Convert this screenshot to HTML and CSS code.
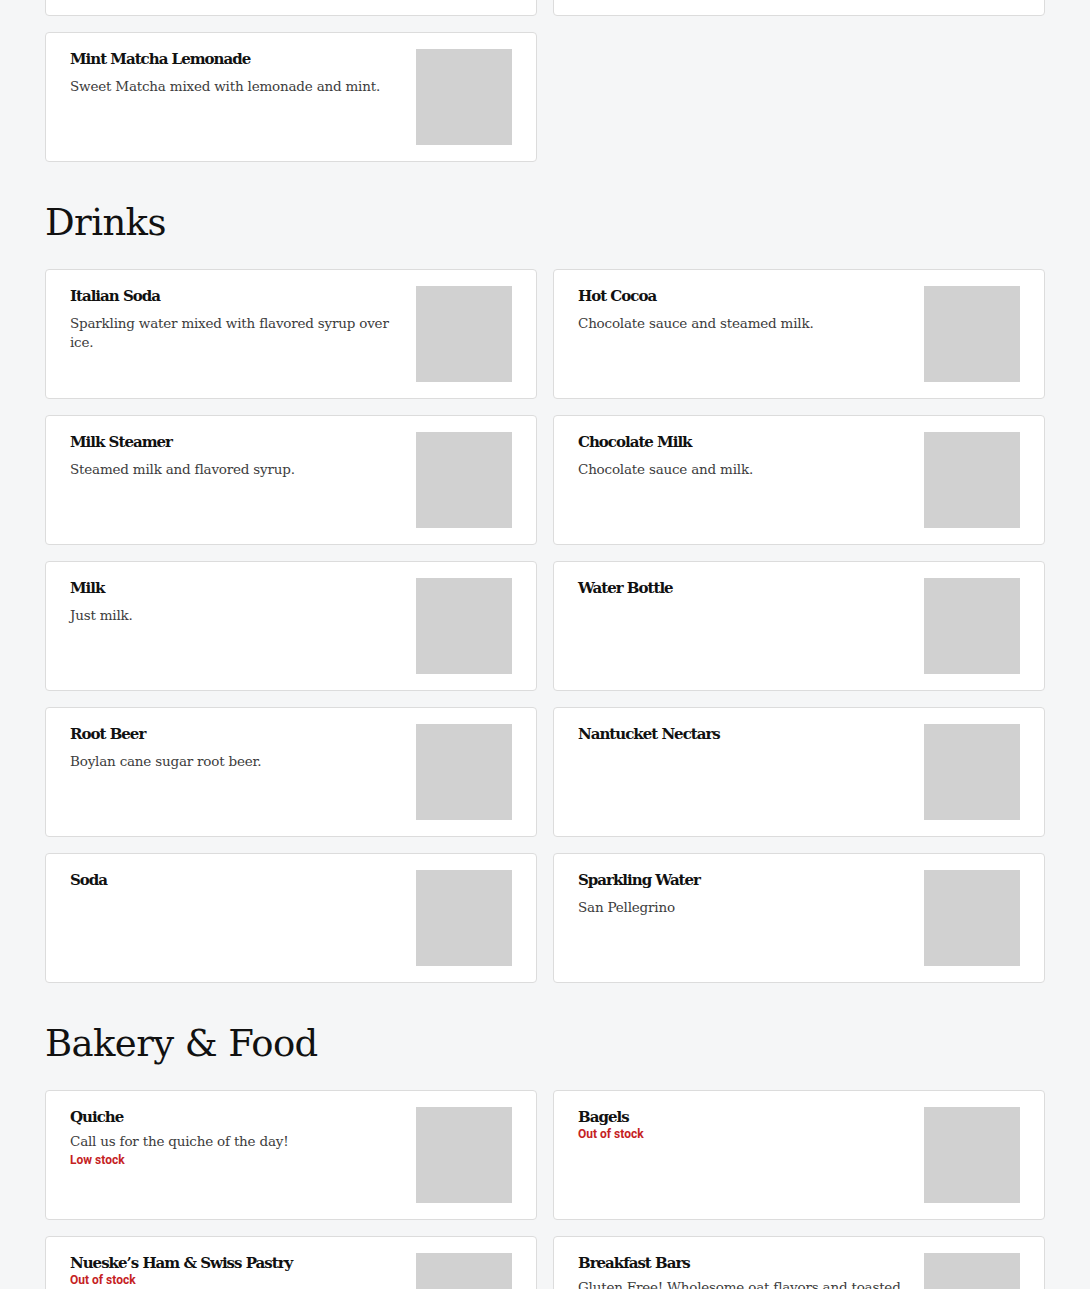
FILE: index.html
```html
<!DOCTYPE html>
<html lang="en">
<head>
    <meta charset="UTF-8">
    <meta name="viewport" content="width=device-width, initial-scale=1.0">
    <title>Menu</title>
    <link rel="stylesheet" href="styles.css">
</head>
<body>
    <main class="menu">
        <section class="menu-section first">
            <h2>Tea</h2>
            <div class="items">
                <div class="item">
                    <div class="item-text">
                        <h3>Matcha Latte</h3>
                        <p>Matcha green tea and steamed milk.</p>
                    </div>
                    <div class="item-photo"></div>
                </div>
                <div class="item">
                    <div class="item-text">
                        <h3>Chai Latte</h3>
                        <p>Spiced chai and steamed milk.</p>
                    </div>
                    <div class="item-photo"></div>
                </div>
                <div class="item">
                    <div class="item-text">
                        <h3>Hot Tea</h3>
                        <p>Ask us about our selection of loose leaf teas.</p>
                    </div>
                    <div class="item-photo"></div>
                </div>
                <div class="item">
                    <div class="item-text">
                        <h3>Iced Tea</h3>
                        <p>Fresh brewed black tea over ice.</p>
                    </div>
                    <div class="item-photo"></div>
                </div>
                <div class="item">
                    <div class="item-text">
                        <h3>Mint Matcha Lemonade</h3>
                        <p>Sweet Matcha mixed with lemonade and mint.</p>
                    </div>
                    <div class="item-photo"></div>
                </div>
            </div>
        </section>

        <section class="menu-section">
            <h2>Drinks</h2>
            <div class="items">
                <div class="item">
                    <div class="item-text">
                        <h3>Italian Soda</h3>
                        <p>Sparkling water mixed with flavored syrup over ice.</p>
                    </div>
                    <div class="item-photo"></div>
                </div>
                <div class="item">
                    <div class="item-text">
                        <h3>Hot Cocoa</h3>
                        <p>Chocolate sauce and steamed milk.</p>
                    </div>
                    <div class="item-photo"></div>
                </div>
                <div class="item">
                    <div class="item-text">
                        <h3>Milk Steamer</h3>
                        <p>Steamed milk and flavored syrup.</p>
                    </div>
                    <div class="item-photo"></div>
                </div>
                <div class="item">
                    <div class="item-text">
                        <h3>Chocolate Milk</h3>
                        <p>Chocolate sauce and milk.</p>
                    </div>
                    <div class="item-photo"></div>
                </div>
                <div class="item">
                    <div class="item-text">
                        <h3>Milk</h3>
                        <p>Just milk.</p>
                    </div>
                    <div class="item-photo"></div>
                </div>
                <div class="item">
                    <div class="item-text">
                        <h3>Water Bottle</h3>
                    </div>
                    <div class="item-photo"></div>
                </div>
                <div class="item">
                    <div class="item-text">
                        <h3>Root Beer</h3>
                        <p>Boylan cane sugar root beer.</p>
                    </div>
                    <div class="item-photo"></div>
                </div>
                <div class="item">
                    <div class="item-text">
                        <h3>Nantucket Nectars</h3>
                    </div>
                    <div class="item-photo"></div>
                </div>
                <div class="item">
                    <div class="item-text">
                        <h3>Soda</h3>
                    </div>
                    <div class="item-photo"></div>
                </div>
                <div class="item">
                    <div class="item-text">
                        <h3>Sparkling Water</h3>
                        <p>San Pellegrino</p>
                    </div>
                    <div class="item-photo"></div>
                </div>
            </div>
        </section>

        <section class="menu-section">
            <h2>Bakery &amp; Food</h2>
            <div class="items">
                <div class="item compact">
                    <div class="item-text">
                        <h3>Quiche</h3>
                        <p>Call us for the quiche of the day!</p>
                        <span class="stock">Low stock</span>
                    </div>
                    <div class="item-photo"></div>
                </div>
                <div class="item compact">
                    <div class="item-text">
                        <h3>Bagels</h3>
                        <span class="stock">Out of stock</span>
                    </div>
                    <div class="item-photo"></div>
                </div>
                <div class="item compact">
                    <div class="item-text">
                        <h3>Nueske’s Ham &amp; Swiss Pastry</h3>
                        <span class="stock">Out of stock</span>
                    </div>
                    <div class="item-photo"></div>
                </div>
                <div class="item compact">
                    <div class="item-text">
                        <h3>Breakfast Bars</h3>
                        <p>Gluten Free! Wholesome oat flavors and toasted nuts.</p>
                    </div>
                    <div class="item-photo"></div>
                </div>
            </div>
        </section>
    </main>
</body>
</html>
```

FILE: styles.css
```css
body {
    margin: 0;
    background-color: #f5f6f7;
    font-family: "DejaVu Serif", "Liberation Serif", serif;
    color: #111;
}
.menu {
    width: 1000px;
    margin: -330px auto 0;
}
.menu-section {
    padding-top: 37px;
}
.menu-section.first {
    padding-top: 0;
}
h2 {
    margin: 0 0 22px;
    font-size: 37px;
    line-height: 48px;
    font-weight: normal;
    letter-spacing: -0.6px;
    color: #111;
}
.items {
    display: grid;
    grid-template-columns: 1fr 1fr;
    gap: 16px;
}
.item {
    display: flex;
    justify-content: space-between;
    gap: 20px;
    background-color: white;
    border: 1px solid #dcdcdc;
    border-radius: 4px;
    padding: 16px 24px;
    height: 96px;
}
.item-text {
    flex: 1;
    min-width: 0;
}
h3 {
    margin: 0;
    font-size: 15px;
    line-height: 20px;
    font-weight: bold;
    letter-spacing: -1px;
    color: #111;
}
.item-text p {
    margin: 8px 0 0;
    font-size: 13.5px;
    line-height: 19px;
    color: #3c3c3c;
    letter-spacing: -0.2px;
}
.item.compact .item-text p {
    margin-top: 5px;
}
.stock {
    display: block;
    font-family: Roboto, "Liberation Sans", sans-serif;
    font-size: 12px;
    line-height: 18px;
    font-weight: bold;
    color: #c5221f;
}
h3 + .stock {
    margin-top: -2px;
}
.item-photo {
    width: 96px;
    height: 96px;
    flex-shrink: 0;
    background-color: #d1d1d1;
}
```
